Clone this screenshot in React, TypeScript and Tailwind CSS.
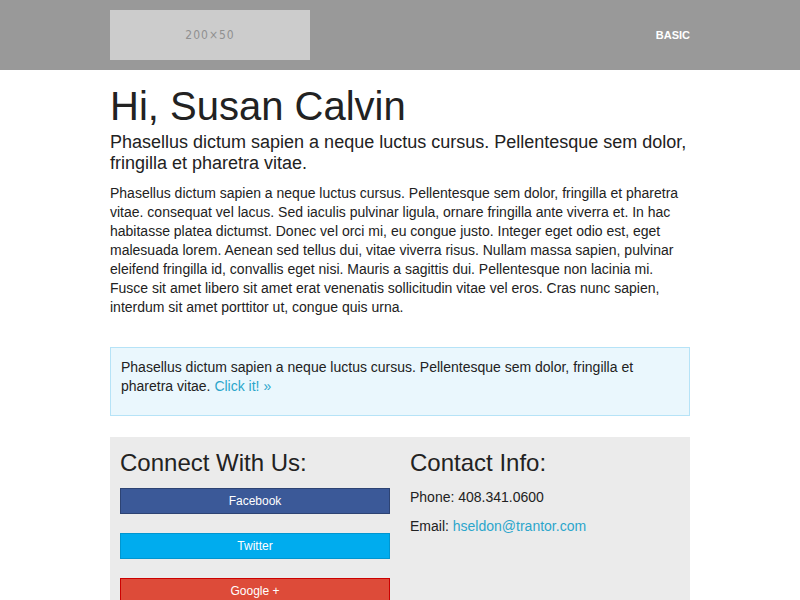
import React from "react";

export default function App() {
  return (
    <div className="min-h-screen bg-white text-[#222] font-['Liberation_Sans',Arial,sans-serif]">
      <header className="bg-[#999999] h-[70px]">
        <div className="w-[580px] mx-auto h-full flex items-center justify-between">
          <div className="w-[200px] h-[50px] bg-[#cccccc] flex items-center justify-center text-[#909090] text-[12px] tracking-[1px] font-['DejaVu_Sans_Condensed','DejaVu_Sans',sans-serif]">
            200×50
          </div>
          <span className="text-white text-[11px] font-bold">BASIC</span>
        </div>
      </header>
      <main className="w-[580px] mx-auto">
        <h1 className="text-[40px] leading-[44px] mt-[14px]">Hi, Susan Calvin</h1>
        <p className="text-[18px] leading-[21px] mt-[4px]">
          Phasellus dictum sapien a neque luctus cursus. Pellentesque sem dolor, fringilla et pharetra vitae.
        </p>
        <p className="text-[14px] leading-[19px] mt-[10px]">
          Phasellus dictum sapien a neque luctus cursus. Pellentesque sem dolor, fringilla et pharetra vitae. consequat vel lacus. Sed iaculis pulvinar ligula, ornare fringilla ante viverra et. In hac habitasse platea dictumst. Donec vel orci mi, eu congue justo. Integer eget odio est, eget malesuada lorem. Aenean sed tellus dui, vitae viverra risus. Nullam massa sapien, pulvinar eleifend fringilla id, convallis eget nisi. Mauris a sagittis dui. Pellentesque non lacinia mi. Fusce sit amet libero sit amet erat venenatis sollicitudin vitae vel eros. Cras nunc sapien, interdum sit amet porttitor ut, congue quis urna.
        </p>
        <div className="mt-[30px] border border-[#b6e3f7] bg-[#eaf7fd] px-[10px] pt-[10px] pb-[19px]">
          <p className="text-[14px] leading-[19px]">
            Phasellus dictum sapien a neque luctus cursus. Pellentesque sem dolor, fringilla et pharetra vitae.{" "}
            <a className="text-[#2ba6cb]">Click it! »</a>
          </p>
        </div>
        <section className="mt-[21px] bg-[#ebebeb] grid grid-cols-2 h-[200px]">
          <div className="px-[10px] pt-[12px]">
            <h2 className="text-[24px] leading-[28px]">Connect With Us:</h2>
            <div className="mt-[11px] flex flex-col gap-[19px]">
              <div className="h-[26px] bg-[#3b5998] border border-[#2d4373] text-white text-[12px] flex items-center justify-center">Facebook</div>
              <div className="h-[26px] bg-[#00acee] border border-[#0096d0] text-white text-[12px] flex items-center justify-center">Twitter</div>
              <div className="h-[26px] bg-[#dd4b39] border border-[#cc0000] text-white text-[12px] flex items-center justify-center">Google +</div>
            </div>
          </div>
          <div className="px-[10px] pt-[12px]">
            <h2 className="text-[24px] leading-[28px]">Contact Info:</h2>
            <p className="mt-[11px] text-[14px] leading-[19px]">Phone: 408.341.0600</p>
            <p className="mt-[10px] text-[14px] leading-[19px]">
              Email: <a className="text-[#2ba6cb]">hseldon@trantor.com</a>
            </p>
          </div>
        </section>
      </main>
    </div>
  );
}
